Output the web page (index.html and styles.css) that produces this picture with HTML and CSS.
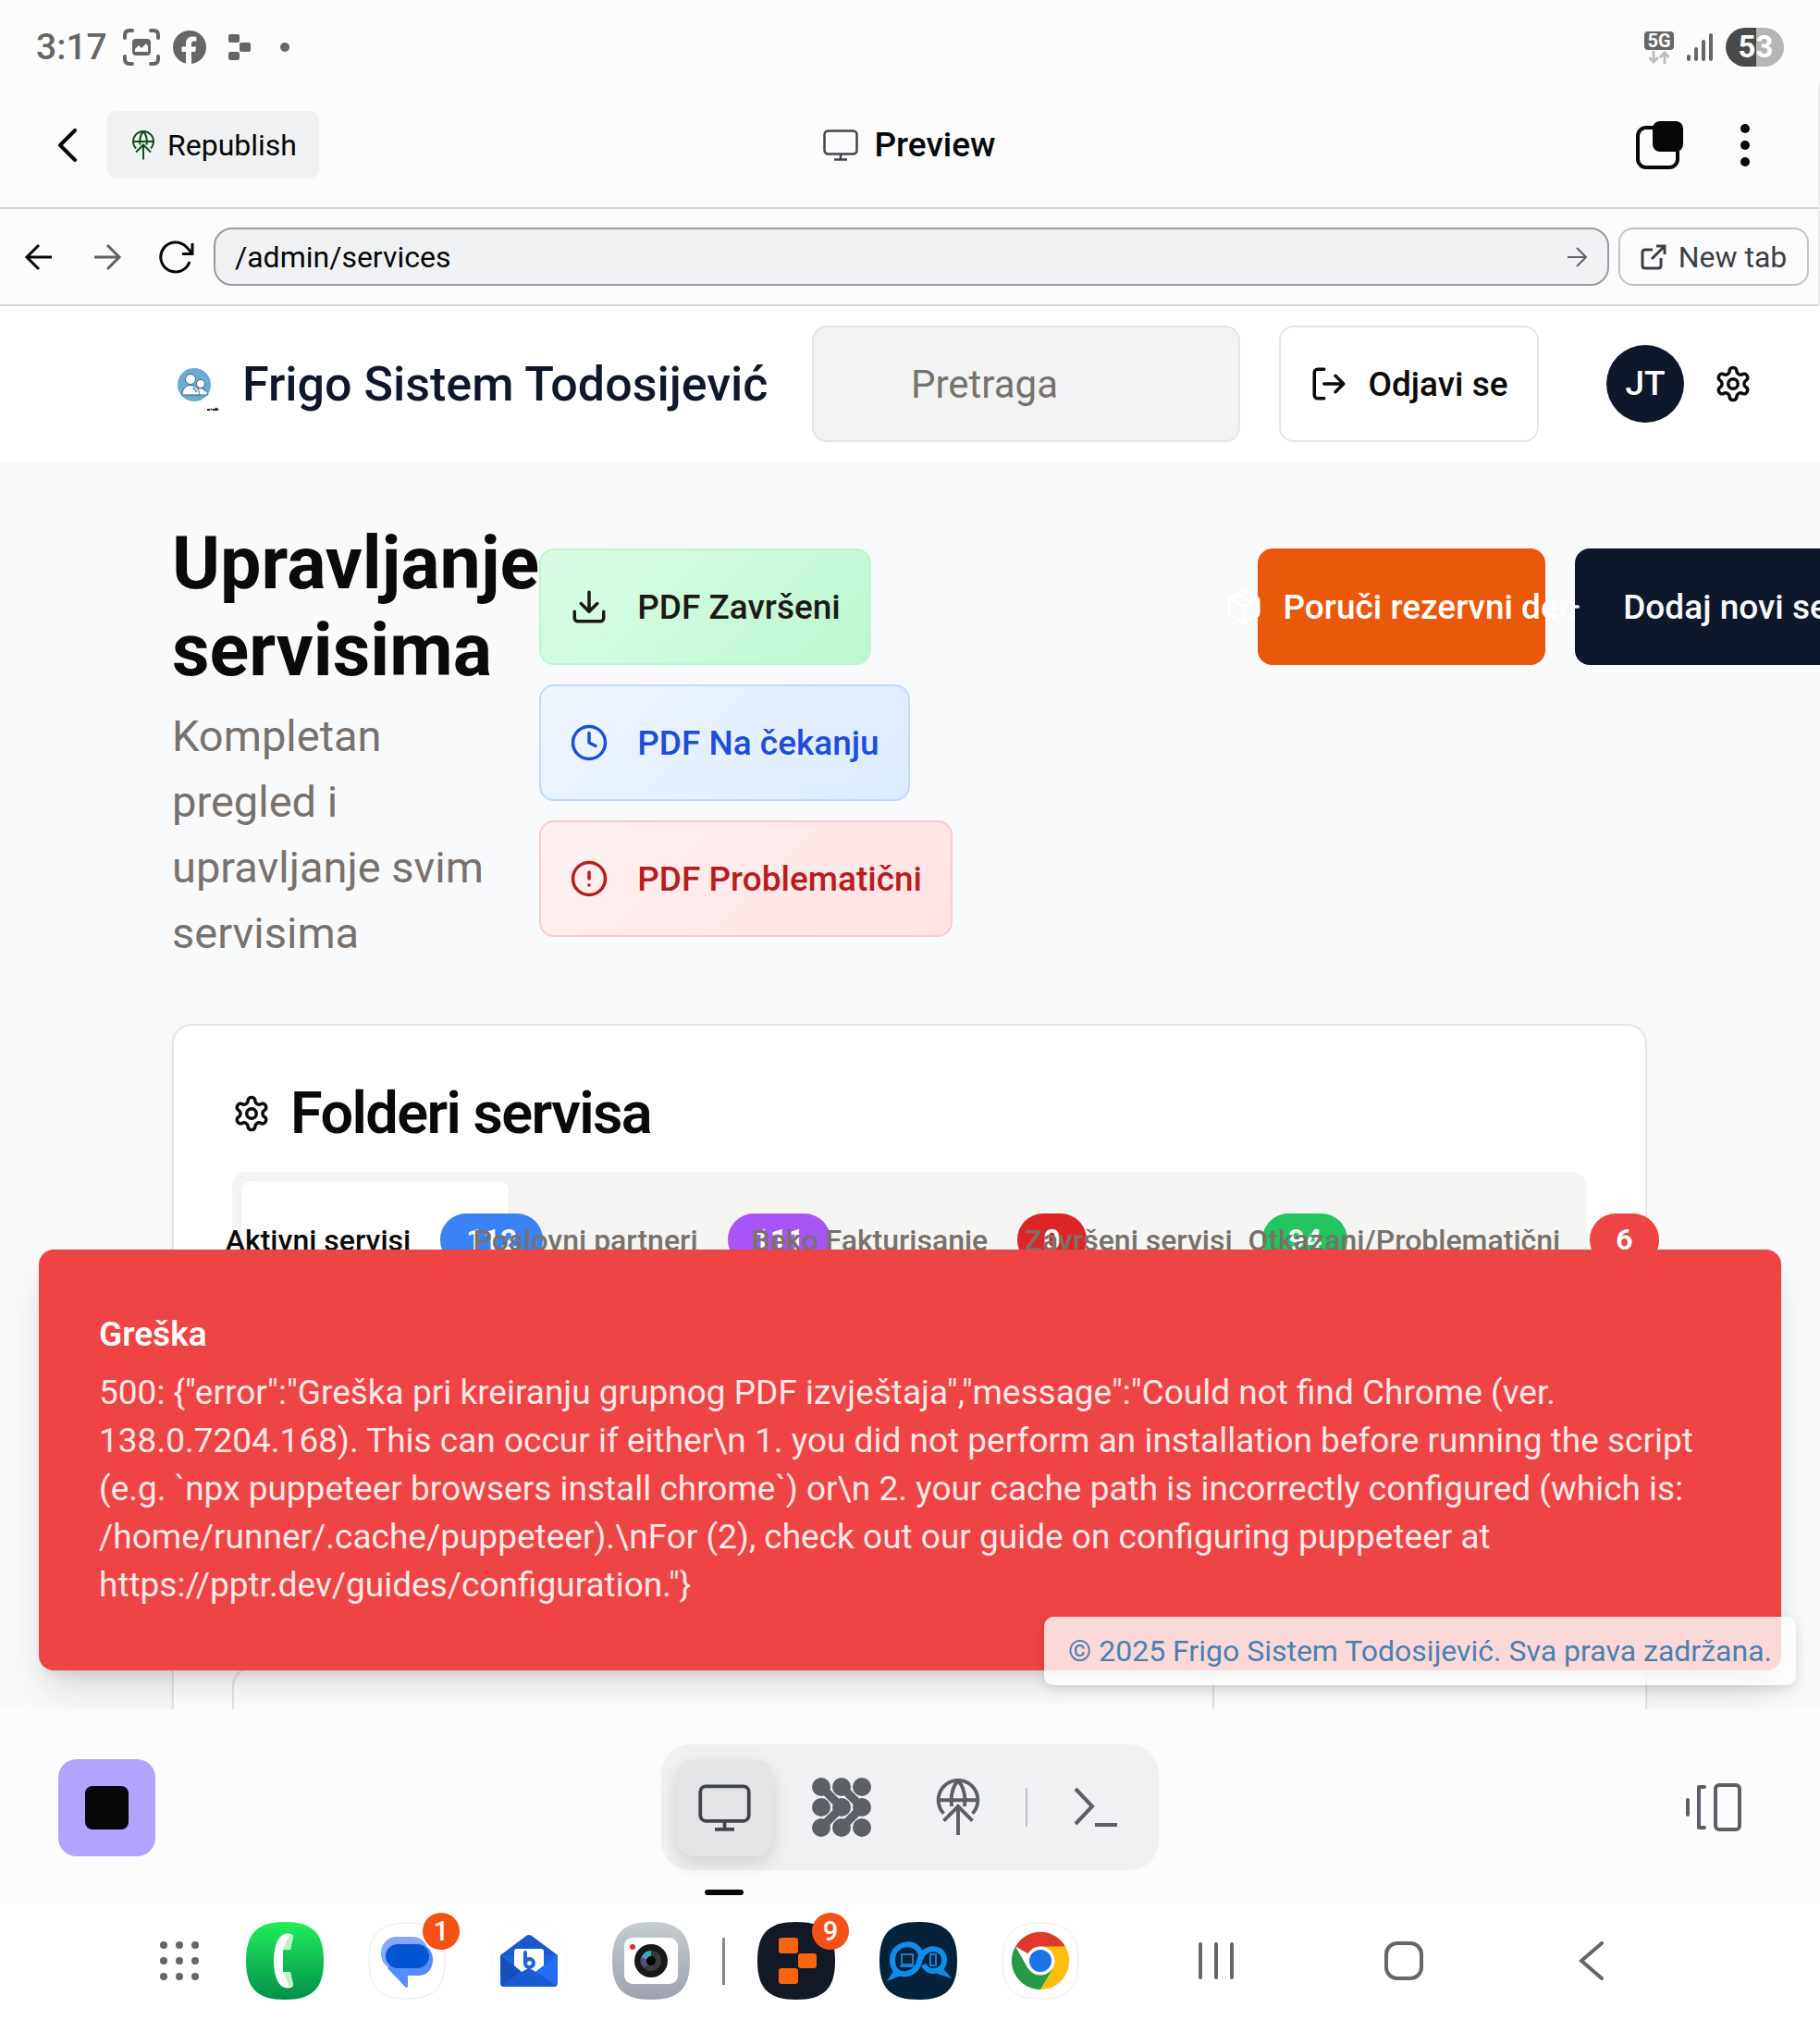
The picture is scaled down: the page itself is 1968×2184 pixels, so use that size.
FILE: index.html
```html
<!DOCTYPE html>
<html lang="sr">
<head>
<meta charset="utf-8">
<meta name="viewport" content="width=device-width, initial-scale=1">
<title>Frigo Sistem Todosijević</title>
<link rel="stylesheet" href="styles.css">
</head>
<body>
<svg class="sprite" aria-hidden="true">
  <symbol id="globe-up" viewBox="0 0 24 32">
    <path d="M4 19.500A11 11 0 1 1 20 19.500M1 12h22M8.500 15.500C7.500 9 9.500 4 12 1c2.500 3 4.500 8 3.500 14.500M12 31.500V15.500M4 23.500l8-8 8 8"/>
  </symbol>
  <symbol id="monitor" viewBox="0 0 38 34">
    <rect x="1.500" y="1.500" width="35" height="25" rx="4"/><path d="M19 26v6M12 32.500h14"/>
  </symbol>
  <symbol id="settings" viewBox="0 0 24 24">
    <path d="M12.220 2h-.44a2 2 0 0 0-2 2v.18a2 2 0 0 1-1 1.730l-.43.25a2 2 0 0 1-2 0l-.15-.08a2 2 0 0 0-2.730.73l-.22.38a2 2 0 0 0 .73 2.730l.15.1a2 2 0 0 1 1 1.720v.51a2 2 0 0 1-1 1.740l-.15.09a2 2 0 0 0-.73 2.730l.22.38a2 2 0 0 0 2.730.73l.15-.08a2 2 0 0 1 2 0l.43.25a2 2 0 0 1 1 1.730V20a2 2 0 0 0 2 2h.44a2 2 0 0 0 2-2v-.18a2 2 0 0 1 1-1.730l.43-.25a2 2 0 0 1 2 0l.15.08a2 2 0 0 0 2.730-.73l.22-.39a2 2 0 0 0-.73-2.730l-.15-.08a2 2 0 0 1-1-1.740v-.5a2 2 0 0 1 1-1.740l.15-.09a2 2 0 0 0 .73-2.730l-.22-.38a2 2 0 0 0-2.730-.73l-.15.08a2 2 0 0 1-2 0l-.43-.25a2 2 0 0 1-1-1.730V4a2 2 0 0 0-2-2z"/><circle cx="12" cy="12" r="3"/>
  </symbol>
</svg>

<header class="status">
  <time class="clock">3:17</time>
  <svg class="st-shot" width="40" height="40" viewBox="0 0 40 40" fill="none" stroke="#666" stroke-width="4" stroke-linecap="round"><path d="M2 10V7q0-5 5-5h3M30 2h3q5 0 5 5v3M38 30v3q0 5-5 5h-3M10 38H7q-5 0-5-5v-3"/><rect x="10" y="11" width="20" height="18" rx="4" fill="#666" stroke="none"/><path d="M13 25v-3l4-4 3 3 5-5 2 3v6z" fill="#fcfcfc" stroke="none"/></svg>
  <svg class="st-fb" width="36" height="36" viewBox="0 0 36 36"><circle cx="18" cy="18" r="18" fill="#666"/><path d="M14 36V23H9.500v-5.500H14V14c0-5 3-7.500 7.500-7.500 2 0 4 .4 4 .4v4.600h-2.500c-2.200 0-3 1.300-3 2.800v3.200h5l-.8 5.500H20v13z" fill="#fcfcfc"/></svg>
  <svg class="st-re" width="24" height="28" viewBox="0 0 24 28" fill="#666"><rect width="12" height="9" rx="2"/><rect x="12" y="9" width="12" height="10" rx="2"/><rect y="19" width="12" height="9" rx="2"/></svg>
  <svg class="st-dot" width="10" height="10" viewBox="0 0 10 10"><circle cx="5" cy="5" r="5" fill="#666"/></svg>
  <div class="status-right">
    <div class="net"><span class="net-label">5G</span>
      <svg width="22" height="14" viewBox="0 0 22 14" fill="none" stroke="#bdbdbd" stroke-width="3"><path d="M5 0v12M0 7l5 5 5-5M17 14V2M12 7l5-5 5 5"/></svg></div>
    <svg width="28" height="30" viewBox="0 0 28 30" stroke="#666" stroke-width="4" stroke-linecap="round"><path d="M2 25v3M10 17v11M18 9v19M26 2v26"/></svg>
    <span class="battery">53</span>
  </div>
</header>

<div class="ide">
  <div class="ide-bar">
    <button class="icon-btn back" aria-label="Back"><svg width="22" height="36" viewBox="0 0 22 36" fill="none" stroke="#050708" stroke-width="4" stroke-linecap="round" stroke-linejoin="round"><path d="M19 2 3 18l16 16"/></svg></button>
    <button class="republish"><svg width="24" height="32"><use href="#globe-up"/></svg>Republish</button>
    <div class="ide-title"><svg width="38" height="34"><use href="#monitor"/></svg>Preview</div>
    <div class="ide-tools">
      <button class="icon-btn" aria-label="Tabs"><svg width="52" height="52" viewBox="0 0 52 52"><rect x="2" y="7" width="43" height="43" rx="9" fill="none" stroke="#050708" stroke-width="4"/><rect x="18" width="33" height="33" rx="8" fill="#050708"/></svg></button>
      <button class="icon-btn" aria-label="More"><svg width="12" height="48" viewBox="0 0 12 48" fill="#050708"><circle cx="6" cy="6" r="5"/><circle cx="6" cy="24" r="5"/><circle cx="6" cy="42" r="5"/></svg></button>
    </div>
  </div>
  <div class="url-bar">
    <button class="icon-btn" aria-label="Previous page"><svg width="32" height="32" viewBox="0 0 32 32" class="ln"><path d="M30 16H3M16 3 3 16l13 13"/></svg></button>
    <button class="icon-btn fwd" aria-label="Next page"><svg width="32" height="32" viewBox="0 0 32 32" class="ln"><path d="M2 16h27M16 3l13 13-13 13"/></svg></button>
    <button class="icon-btn reload" aria-label="Reload"><svg width="38" height="36" viewBox="0 0 38 36" class="ln"><path d="M33 23A16 16 0 1 1 29.500 7l6.500 7M36 3v11.500H25"/></svg></button>
    <div class="url-field">
      <input type="text" value="/admin/services" aria-label="Path">
      <svg width="22" height="22" viewBox="0 0 22 22" class="ln"><path d="M1 11h19M11 1l10 10-10 10"/></svg>
    </div>
    <button class="new-tab"><svg width="28" height="28" viewBox="0 0 28 28" class="ln"><path d="M13 6H5Q2 6 2 9v14q0 3 3 3h14q3 0 3-3v-8M12 16 26 2M17 2h9v9"/></svg>New tab</button>
  </div>
</div>

<div class="preview">
  <div class="app-header">
    <svg class="logo" width="53" height="63" viewBox="0 0 53 63"><circle cx="23" cy="32" r="18" fill="#6babd4"/><g fill="#fff" stroke="#3b6585" stroke-width="1"><circle cx="30" cy="31" r="4.500"/><path d="M24 43v-3c1-6 12-6 14 3z"/><circle cx="19" cy="26" r="5.500"/><path d="M10 43c0-14 18-14 19 0z"/></g><path d="M22 35l4 5M33 35l2 4" stroke="#4c9bd0" stroke-width="2"/><path d="M37 59h3m1 0 1-1m1 1h2l1-1m1 2v-2l2 1" stroke="#222" stroke-width="2" fill="none"/></svg>
    <span class="brand">Frigo Sistem Todosijević</span>
    <input class="search" type="search" placeholder="Pretraga" aria-label="Pretraga">
    <button class="btn logout"><svg class="ic" viewBox="0 0 24 24"><path d="M9 21H5a2 2 0 0 1-2-2V5a2 2 0 0 1 2-2h4M16 17l5-5-5-5M21 12H9"/></svg>Odjavi se</button>
    <span class="avatar">JT</span>
    <button class="icon-btn" aria-label="Podešavanja"><svg class="ic"><use href="#settings"/></svg></button>
  </div>

  <main class="content">
    <section class="page-head">
      <div class="page-title">
        <h1>Upravljanje servisima</h1>
        <p>Kompletan pregled i upravljanje svim servisima</p>
      </div>
      <div class="actions">
        <div class="pdf-actions">
          <button class="btn pdf green"><svg class="ic" viewBox="0 0 24 24"><path d="M21 15v4a2 2 0 0 1-2 2H5a2 2 0 0 1-2-2v-4M7 10l5 5 5-5M12 15V3"/></svg>PDF Završeni</button>
          <button class="btn pdf blue"><svg class="ic" viewBox="0 0 24 24"><circle cx="12" cy="12" r="10"/><path d="M12 6v6l4 2"/></svg>PDF Na čekanju</button>
          <button class="btn pdf red"><svg class="ic" viewBox="0 0 24 24"><circle cx="12" cy="12" r="10"/><path d="M12 8v4M12 16h.01"/></svg>PDF Problematični</button>
        </div>
        <button class="btn order"><svg class="ic" viewBox="0 0 24 24"><path d="M11 21.730a2 2 0 0 0 2 0l7-4A2 2 0 0 0 21 16V8a2 2 0 0 0-1-1.730l-7-4a2 2 0 0 0-2 0l-7 4A2 2 0 0 0 3 8v8a2 2 0 0 0 1 1.730zM12 22V12M3.300 7 12 12l8.700-5M7.500 4.270l9 5.150"/></svg>Poruči rezervni deo</button>
        <button class="btn add"><svg class="ic" viewBox="0 0 24 24"><path d="M5 12h14M12 5v14"/></svg>Dodaj novi servis</button>
      </div>
    </section>

    <section class="card">
      <h2><svg class="ic"><use href="#settings"/></svg>Folderi servisa</h2>
      <div class="tabs" role="tablist">
        <button class="tab active" role="tab" aria-selected="true">Aktivni servisi<span class="badge b-blue">112</span></button>
        <button class="tab" role="tab">Poslovni partneri<span class="badge b-purple">111</span></button>
        <button class="tab" role="tab">Beko Fakturisanje<span class="badge b-crimson">0</span></button>
        <button class="tab" role="tab">Završeni servisi<span class="badge b-green">94</span></button>
        <button class="tab" role="tab">Otkazani/Problematični<span class="badge b-red">6</span></button>
      </div>
      <div class="panel"></div>
    </section>
  </main>

  <div class="toast" role="alert">
    <strong>Greška</strong>
    <p>500: {"error":"Greška pri kreiranju grupnog PDF izvještaja","message":"Could not find Chrome (ver. 138.0.7204.168). This can occur if either\n 1. you did not perform an installation before running the script (e.g. `npx puppeteer browsers install chrome`) or\n 2. your cache path is incorrectly configured (which is: /home/runner/.cache/puppeteer).\nFor (2), check out our guide on configuring puppeteer at https://pptr.dev/guides/configuration."}</p>
  </div>
  <footer class="copyright">© 2025 Frigo Sistem Todosijević. Sva prava zadržana.</footer>
</div>

<div class="dock-tools">
  <button class="stop" aria-label="Stop"><span></span></button>
  <div class="switcher">
    <button class="sw active" aria-label="Preview"><svg width="57" height="51" class="mon"><use href="#monitor"/></svg></button>
    <button class="sw" aria-label="Agent"><svg width="64" height="64" viewBox="0 0 64 64" fill="#5c5f66"><path d="M10 10 32 32 10 54M32 10 54 32 32 54" fill="none" stroke="#5c5f66" stroke-width="9"/><circle cx="10" cy="10" r="10"/><circle cx="32" cy="10" r="10"/><circle cx="54" cy="10" r="10"/><circle cx="10" cy="32" r="10"/><circle cx="32" cy="32" r="10"/><circle cx="54" cy="32" r="10"/><circle cx="10" cy="54" r="10"/><circle cx="32" cy="54" r="10"/><circle cx="54" cy="54" r="10"/></svg></button>
    <button class="sw" aria-label="Publish"><svg width="48" height="62" class="globe"><use href="#globe-up"/></svg></button>
    <i class="sep"></i>
    <button class="sw" aria-label="Shell"><svg width="48" height="44" viewBox="0 0 48 44" fill="none" stroke="#5c5f66" stroke-width="4"><path d="M2 2l18 19L2 40M23 41h24"/></svg></button>
  </div>
  <button class="icon-btn" aria-label="Panels"><svg width="62" height="52" viewBox="0 0 62 52" fill="none" stroke="#5c5f66" stroke-width="4" stroke-linecap="round" stroke-linejoin="round"><path d="M3 18v16M21 4h-6v44h6"/><rect x="33" y="2" width="26" height="48" rx="4"/></svg></button>
</div>

<nav class="system-nav">
  <button class="icon-btn apps" aria-label="Apps"><svg width="46" height="46" viewBox="0 0 46 46" fill="#666"><circle cx="6" cy="6" r="4"/><circle cx="23" cy="6" r="4"/><circle cx="40" cy="6" r="4"/><circle cx="6" cy="23" r="4"/><circle cx="23" cy="23" r="4"/><circle cx="40" cy="23" r="4"/><circle cx="6" cy="40" r="4"/><circle cx="23" cy="40" r="4"/><circle cx="40" cy="40" r="4"/></svg></button>
  <div class="app-group">
    <button class="app" aria-label="Phone"><svg width="84" height="84" viewBox="0 0 84 84"><defs><linearGradient id="gp" x2="0" y2="1"><stop stop-color="#21ee5a"/><stop offset="1" stop-color="#008f4c"/></linearGradient></defs><path d="M42 0C72 0 84 12 84 42S72 84 42 84 0 72 0 42 12 0 42 0Z" fill="url(#gp)"/><path d="M51 15c-1-2-5-3-9-2-8 2-12 15-12 29s4 27 12 29c4 1 8 0 9-2l-3-15h-8V30h8z" fill="#fff"/><path d="M47 14q5 1 4 4l-3 10q-1 3-5 2l-3-1zM47 70q5-1 4-4l-3-10q-1-3-5-2l-3 1z" fill="#c0f2d0"/></svg></button>
    <button class="app" aria-label="Messages"><svg width="84" height="84" viewBox="0 0 84 84"><path d="M42 1C71 1 83 13 83 42S71 83 42 83 1 71 1 42 13 1 42 1Z" fill="#fff" stroke="#e8e8e8"/><rect x="14" y="16" width="51" height="36" rx="17" fill="#86a7ff"/><path d="M43 24h12c20 0 20 34 0 34H43v12q-1 2-3 0L21 50z" fill="#588cff"/><rect x="19" y="24" width="47" height="26" rx="13" fill="#0257d0"/></svg><span class="count">1</span></button>
    <button class="app" aria-label="Mail"><svg width="84" height="84" viewBox="0 0 84 84"><path d="M42 1C71 1 83 13 83 42S71 83 42 83 1 71 1 42 13 1 42 1Z" fill="#fff" stroke="#fafafa"/><path d="M11 36 39 15q3-2 6 0l28 21z" fill="#1b58cf"/><path d="M11 36h62v30q0 4-4 4H15q-4 0-4-4z" fill="#1d62e4"/><path d="M11 36 34 54 12 69z" fill="#164fb8"/><path d="M73 36 50 54 72 69z" fill="#226df5"/><path d="M29 29h26q3 0 3 3v15l-9 7-7-4-8 4-8-7V32q0-3 3-3z" fill="#fff"/><path d="M38 33v12M38 45a4.500 4.500 0 1 0 5-5q-5 0-5 5" fill="none" stroke="#1d62e4" stroke-width="4" stroke-linecap="round"/><path d="M12 69 38 52q4-2 8 0l26 17q-1 1-3 1H15q-2 0-3-1z" fill="#1a59d2"/></svg></button>
    <button class="app" aria-label="Camera"><svg width="84" height="84" viewBox="0 0 84 84"><defs><linearGradient id="gc" x2="0" y2="1"><stop stop-color="#c5ced0"/><stop offset="1" stop-color="#9da1b0"/></linearGradient></defs><path d="M42 0C72 0 84 12 84 42S72 84 42 84 0 72 0 42 12 0 42 0Z" fill="url(#gc)"/><rect x="13" y="17" width="58" height="50" rx="9" fill="#fff"/><circle cx="22" cy="27" r="3" fill="#e42b2b"/><circle cx="42" cy="42" r="18" fill="#181818"/><circle cx="42" cy="42" r="11" fill="#3b3a3d"/><path d="M42 42H31a11 11 0 0 1 11-11z" fill="#36a8c2"/><path d="M42 42 35 50a11 11 0 0 1-4-12z" fill="#594d78"/><circle cx="42" cy="42" r="5"/></svg></button>
  </div>
  <i class="nav-sep"></i>
  <div class="app-group">
    <button class="app" aria-label="Replit"><svg width="84" height="84" viewBox="0 0 84 84"><path d="M42 0C72 0 84 12 84 42S72 84 42 84 0 72 0 42 12 0 42 0Z" fill="#121825"/><g fill="#f8650d"><rect x="23" y="17" width="21" height="17" rx="3"/><rect x="44" y="34" width="20" height="16" rx="3"/><rect x="23" y="50" width="21" height="17" rx="3"/></g></svg><span class="count">9</span></button>
    <button class="app" aria-label="Servis"><svg width="84" height="84" viewBox="0 0 84 84"><path d="M42 0C72 0 84 12 84 42S72 84 42 84 0 72 0 42 12 0 42 0Z" fill="#04233a"/><g fill="none" stroke="#128ceb" stroke-width="6"><path d="M45 40C46 18 14 20 14 41c0 22 26 18 29 2 3-18 27-18 27-2 0 14-18 16-22 5"/><path d="m19 51-6 9 10-4M65 49l7 8-9-3" stroke-width="4"/></g><path d="M24 35h12v11H24zM22 48h16M55 35h6v12h-6z" fill="none" stroke="#1180d7" stroke-width="2"/></svg></button>
    <button class="app" aria-label="Chrome"><svg width="84" height="84" viewBox="0 0 84 84"><path d="M42 1C71 1 83 13 83 42S71 83 42 83 1 71 1 42 13 1 42 1Z" fill="#fff" stroke="#ececec"/><path d="M42 42 15 26.500a31 31 0 0 1 54 0z" fill="#df392e"/><path d="M42 42V26.500h27A31 31 0 0 1 42 73z" fill="#fdbe0e"/><path d="M42 73A31 31 0 0 1 15 26.500L28.500 50 42 42l13.500 8z" fill="#2a9947"/><circle cx="42" cy="42" r="15.500" fill="#fff"/><circle cx="42" cy="42" r="12" fill="#1b74e8"/></svg></button>
  </div>
  <div class="sys-keys">
    <button class="icon-btn" aria-label="Recents"><svg width="42" height="42" viewBox="0 0 42 42" stroke="#666" stroke-width="4" stroke-linecap="round"><path d="M4 3v36M21 3v36M38 3v36"/></svg></button>
    <button class="icon-btn" aria-label="Home"><svg width="42" height="42" viewBox="0 0 42 42" fill="none" stroke="#666" stroke-width="4"><rect x="2" y="2" width="38" height="38" rx="12"/></svg></button>
    <button class="icon-btn" aria-label="Back"><svg width="28" height="42" viewBox="0 0 28 42" fill="none" stroke="#666" stroke-width="4" stroke-linecap="round"><path d="M25 2 3 21l22 19"/></svg></button>
  </div>
</nav>
</body>
</html>
```
FILE: styles.css
```css
* { box-sizing: border-box; }

body {
  margin: 0;
  height: 100vh;
  display: flex;
  flex-direction: column;
  overflow: hidden;
  background: #fcfcfc;
  color: #0c0a09;
  font-family: Roboto, sans-serif;
  font-size: 37px;
}

button, input { font: inherit; color: inherit; }
button { border: 0; background: none; padding: 0; }
svg { display: block; flex: none; }
h1, h2, p { margin: 0; }

.sprite { position: absolute; width: 0; height: 0; }
.ic {
  width: 42px;
  height: 42px;
  fill: none;
  stroke: currentColor;
  stroke-width: 2;
  stroke-linecap: round;
  stroke-linejoin: round;
}
.ln { fill: none; stroke: currentColor; stroke-width: 3; }
.icon-btn { display: flex; align-items: center; justify-content: center; flex: none; }

/* Phone status bar */
.status {
  flex: none;
  height: 89px;
  padding: 13px 39px 0;
  display: flex;
  align-items: center;
}
.clock { font-size: 39px; font-weight: 500; color: #666; margin-right: 17px; }
.st-shot { margin-right: 14px; }
.st-fb { margin-right: 24px; }
.st-re { margin-right: 32px; }
.status-right { margin-left: auto; display: flex; align-items: center; gap: 14px; }
.net { display: flex; flex-direction: column; align-items: center; gap: 1px; }
.net-label {
  width: 32px;
  background: #666;
  color: #fcfcfc;
  border-radius: 4px;
  font-size: 20px;
  line-height: 20px;
  font-weight: 700;
  text-align: center;
}
.battery {
  width: 63px;
  border-radius: 21px;
  background: linear-gradient(90deg, #4a4a4a 33px, #b5b5b5 33px);
  color: #fff;
  font-size: 33px;
  line-height: 42px;
  font-weight: 700;
  text-align: center;
  padding-left: 2px;
}

/* Workspace bars */
.ide { flex: none; border-right: 2px solid #ececee; color: #050708; }
.ide-bar {
  height: 137px;
  padding: 0 73px 0 62px;
  display: grid;
  grid-template-columns: auto auto 1fr;
  align-items: center;
  position: relative;
  border-bottom: 2px solid #d4d4d5;
}
.back { margin-right: 32px; }
.republish {
  height: 73px;
  padding: 0 24px 0 27px;
  display: flex;
  align-items: center;
  gap: 14px;
  border-radius: 10px;
  background: #f0f1f3;
  font-size: 32px;
}
.republish svg { fill: none; stroke: #0f4f1b; stroke-width: 2; }
.ide-title {
  position: absolute;
  left: 0;
  right: 0;
  display: flex;
  justify-content: center;
  align-items: center;
  gap: 18px;
  font-weight: 500;
  pointer-events: none;
}
.ide-title svg { fill: none; stroke: #41444c; stroke-width: 2.5; }
.ide-tools { justify-self: end; display: flex; align-items: center; gap: 60px; }

.url-bar {
  height: 105px;
  padding: 0 10px 0 26px;
  display: flex;
  align-items: center;
  border-bottom: 2px solid #d4d4d5;
  font-size: 32px;
}
.fwd { margin-left: 42px; color: #5f626a; }
.reload { margin: 0 21px 0 40px; }
.url-field {
  flex: 1;
  height: 63px;
  padding: 0 22px 0 21px;
  display: flex;
  align-items: center;
  border: 2px solid #979a9e;
  border-radius: 20px;
  background: #f0f1f3;
}
.url-field input { flex: 1; min-width: 0; border: 0; padding: 0; background: none; outline: 0; }
.url-field svg { color: #5f626a; stroke-width: 2; }
.new-tab {
  height: 63px;
  width: 206px;
  margin-left: 10px;
  display: flex;
  align-items: center;
  justify-content: center;
  gap: 13px;
  border: 2px solid #c2c4c6;
  border-radius: 16px;
  color: #3c4046;
}

/* Previewed page */
.preview {
  flex: 1;
  min-height: 0;
  position: relative;
  overflow: hidden;
  background: #f9fafc;
}
.app-header {
  height: 168px;
  padding: 0 73px 0 187px;
  display: flex;
  align-items: center;
  background: #fff;
}
.brand { flex: 1; margin-left: 22px; font-size: 52px; font-weight: 500; color: #0f172a; white-space: nowrap; }
.search {
  width: 463px;
  height: 126px;
  padding: 0 32px 0 105px;
  border: 2px solid #e5e5e5;
  border-radius: 16px;
  background: #f2f3f4;
  font-size: 42px;
}
.search::placeholder { color: #78716c; opacity: 1; }
.btn {
  flex: none;
  height: 126px;
  display: flex;
  align-items: center;
  justify-content: center;
  gap: 21px;
  border-radius: 16px;
  font-weight: 500;
  white-space: nowrap;
}
.logout { width: 281px; margin: 0 73px 0 42px; border: 2px solid #e5e5e5; background: #fff; }
.avatar {
  width: 84px;
  line-height: 84px;
  margin-right: 32px;
  border-radius: 50%;
  background: #0f172a;
  color: #fff;
  font-weight: 500;
  text-align: center;
}

.content { padding: 63px 187px 0 186px; }
.page-head { display: flex; align-items: center; margin-bottom: 63px; }
.page-title { flex: 0 0 396px; }
h1 { font-size: 79px; line-height: 94px; font-weight: 700; }
.page-title p { max-width: 360px; margin-top: 10px; font-size: 47px; line-height: 71px; color: #78716c; }
.actions { display: flex; align-items: flex-start; gap: 32px; }
.pdf-actions {
  flex: 0 0 745px;
  display: flex;
  flex-direction: column;
  align-items: flex-start;
  gap: 21px;
}
.pdf { padding: 0 31px; gap: 31px; border: 2px solid; }
.green { color: #1c1917; border-color: #bbf7d0; background: linear-gradient(135deg, #dcfce7, #bbf7d0) border-box; }
.blue { color: #1d4ed8; border-color: #bfdbfe; background: linear-gradient(135deg, #eff6ff, #dbeafe) border-box; }
.red { color: #b91c1c; border-color: #fecaca; background: linear-gradient(135deg, #fef2f2, #fee2e2) border-box; }
.order { width: 311px; background: #ea580c; color: #fff; }
.add { width: 304px; gap: 40px; background: #0f172a; color: #f8fafc; }

.card {
  padding: 63px;
  border: 2px solid #e5e5e5;
  border-radius: 21px;
  background: #fff;
  box-shadow: 0 2px 5px rgba(0, 0, 0, .04);
}
h2 {
  display: flex;
  align-items: center;
  gap: 21px;
  font-size: 63px;
  line-height: 63px;
  font-weight: 600;
  letter-spacing: -0.025em;
}
.tabs {
  margin-top: 32px;
  padding: 10px;
  display: grid;
  grid-template-columns: repeat(5, minmax(0, 1fr));
  border-radius: 16px;
  background: #f5f5f4;
}
.tab {
  height: 127px;
  padding-left: 20px;
  display: flex;
  align-items: center;
  justify-content: center;
  gap: 32px;
  border-radius: 10px;
  color: #78716c;
  font-size: 32px;
  font-weight: 500;
  white-space: nowrap;
}
.tab.active { background: #fff; color: #0c0a09; box-shadow: 0 2px 5px rgba(0, 0, 0, .06); }
.badge {
  padding: 0 28px;
  border-radius: 28px;
  color: #fff;
  line-height: 57px;
  font-weight: 700;
}
.b-blue { background: #3b82f6; }
.b-purple { background: #a855f7; }
.b-crimson { background: #dc2626; }
.b-green { background: #22c55e; }
.b-red { background: #ef4444; }
.panel {
  width: 1062px;
  max-width: 100%;
  height: 400px;
  margin-top: 388px;
  border: 2px solid #e5e5e5;
  border-radius: 21px;
}

.toast {
  position: absolute;
  left: 42px;
  right: 42px;
  bottom: 42px;
  padding: 65px 84px 66px 65px;
  border-radius: 16px;
  background: #ef4444;
  color: #fafafa;
  line-height: 53px;
  box-shadow: 0 26px 40px -8px rgba(0, 0, 0, .14), 0 10px 16px -8px rgba(0, 0, 0, .12);
}
.toast strong { display: block; font-weight: 600; }
.toast p { margin-top: 11px; line-height: 52px; opacity: .9; }
.copyright {
  position: absolute;
  right: 26px;
  bottom: 26px;
  padding: 0 26px;
  border-radius: 10px;
  background: rgba(255, 255, 255, .8);
  color: #4a80b0;
  font-size: 32px;
  line-height: 74px;
  white-space: nowrap;
  box-shadow: 0 5px 13px rgba(0, 0, 0, .12);
}

/* Workspace tools */
.dock-tools {
  flex: none;
  height: 210px;
  padding: 2px 84px 0 63px;
  display: grid;
  grid-template-columns: 1fr auto 1fr;
  align-items: center;
}
.dock-tools > :last-child { justify-self: end; }
.stop {
  width: 105px;
  height: 105px;
  display: grid;
  place-items: center;
  border-radius: 20px;
  background: #b1a3ff;
}
.stop span { width: 47px; height: 47px; border-radius: 8px; background: #050708; }
.switcher {
  height: 136px;
  margin-left: 21px;
  padding: 0 16px;
  display: flex;
  align-items: center;
  gap: 21px;
  border-radius: 32px;
  background: #f0f1f3;
}
.sw {
  position: relative;
  width: 105px;
  height: 105px;
  display: grid;
  place-items: center;
  border-radius: 20px;
}
.sw.active { background: #e3e4e6; box-shadow: 0 8px 20px rgba(0, 0, 0, .14); }
.sw.active::after {
  content: "";
  position: absolute;
  left: 31px;
  bottom: -42px;
  width: 42px;
  height: 6px;
  border-radius: 3px;
  background: #050708;
}
.mon { fill: none; stroke: #41444c; stroke-width: 2.5; }
.globe { fill: none; stroke: #5c5f66; stroke-width: 2; }
.sep { width: 2px; height: 42px; background: #c0c2c5; }

/* Android navigation bar */
.system-nav {
  flex: none;
  height: 126px;
  padding: 0 205px 2px 171px;
  display: flex;
  align-items: center;
  background: #fff;
}
.apps { margin-right: 49px; }
.app-group { display: flex; gap: 48px; }
.app { position: relative; width: 84px; height: 84px; }
.count {
  position: absolute;
  top: -10px;
  right: -15px;
  width: 40px;
  border-radius: 50%;
  background: #f55015;
  color: #fff;
  font-size: 29px;
  line-height: 40px;
  font-weight: 500;
  text-align: center;
}
.nav-sep { width: 3px; height: 51px; margin: 0 35px; background: #888; }
.sys-keys { flex: 1; display: flex; justify-content: flex-end; gap: 119px; }
.sys-keys .icon-btn { width: 84px; }
```
